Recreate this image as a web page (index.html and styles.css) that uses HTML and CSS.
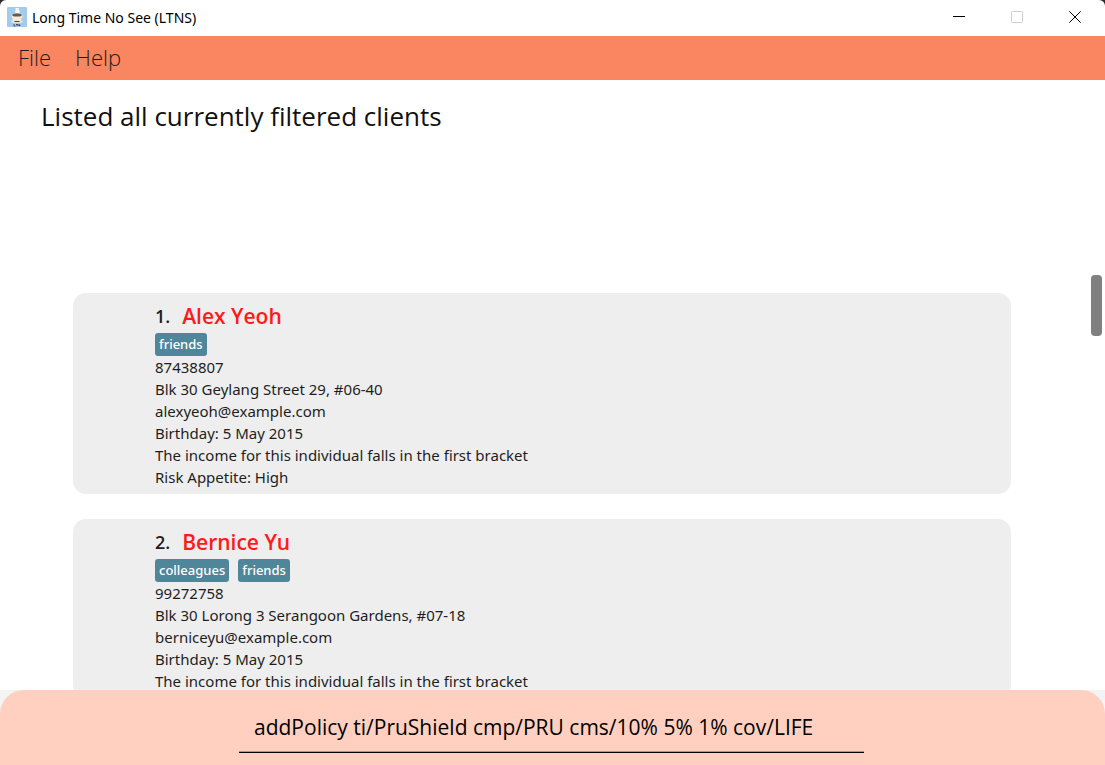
FILE: index.html
```html
<!DOCTYPE html>
<html lang="en">
<head>
<meta charset="utf-8">
<title>Long Time No See (LTNS)</title>
<link rel="stylesheet" href="styles.css">
</head>
<body>
<div class="window">
  <header class="titlebar">
    <svg class="app-icon" viewBox="0 0 20 20" aria-hidden="true">
      <rect width="20" height="20" rx="1" fill="#a3cbee"/>
      <path d="M8.500 6C7.500 4 9 3 8.500 1h3.500c-1 2 1.500 2 .5 5z" fill="#f4f8fb"/>
      <ellipse cx="10" cy="14.500" rx="6" ry="1.800" fill="#e9e3d8"/>
      <path d="M4.500 7.500h11c0 4.500-2 7-5.500 7s-5.500-2.500-5.500-7z" fill="#f3ead9"/>
      <path d="M15 8.500c2.500-.5 2 3-1 3" fill="none" stroke="#d8cdb8"/>
      <ellipse cx="10" cy="8" rx="4.800" ry="1.600" fill="#6b5847"/>
      <path d="M7.500 14.500h5" stroke="#4c443b"/>
      <path d="M7 17v2h1.500M9 17.500h2M10 17.500V19M11.800 19v-1.500l1 1.500v-1.500" fill="none" stroke="#26384c" stroke-width=".8"/>
    </svg>
    <h1 class="window-title">Long Time No See (LTNS)</h1>
    <div class="window-controls">
      <button class="window-button" type="button" aria-label="Minimize"><svg viewBox="0 0 12 12"><path d="M0 5.500h12"/></svg></button>
      <button class="window-button" type="button" aria-label="Maximize" disabled><svg viewBox="0 0 12 12"><rect x=".5" y=".5" width="11" height="11" rx="1"/></svg></button>
      <button class="window-button" type="button" aria-label="Close"><svg viewBox="0 0 12 12"><path d="M.3.3l11.400 11.400M11.700.3L.3 11.700"/></svg></button>
    </div>
  </header>
  <nav class="menubar">
    <button class="menu" type="button">File</button>
    <button class="menu" type="button">Help</button>
  </nav>
  <main class="content">
    <p class="result" role="status">Listed all currently filtered clients</p>
    <div class="list-area">
      <ol class="clients">
        <li class="card">
          <h2 class="card-head"><span class="index">1.</span><span class="name">Alex Yeoh</span></h2>
          <div class="tags"><span class="tag">friends</span></div>
          <p>87438807</p>
          <p>Blk 30 Geylang Street 29, #06-40</p>
          <p>alexyeoh@example.com</p>
          <p>Birthday: 5 May 2015</p>
          <p>The income for this individual falls in the first bracket</p>
          <p>Risk Appetite: High</p>
        </li>
        <li class="card">
          <h2 class="card-head"><span class="index">2.</span><span class="name">Bernice Yu</span></h2>
          <div class="tags"><span class="tag">colleagues</span><span class="tag">friends</span></div>
          <p>99272758</p>
          <p>Blk 30 Lorong 3 Serangoon Gardens, #07-18</p>
          <p>berniceyu@example.com</p>
          <p>Birthday: 5 May 2015</p>
          <p>The income for this individual falls in the first bracket</p>
        </li>
      </ol>
      <div class="scrollbar"><div class="thumb"></div></div>
    </div>
  </main>
  <footer class="command-area">
    <form class="command-bar">
      <input class="command" type="text" aria-label="Command" value="addPolicy ti/PruShield cmp/PRU cms/10% 5% 1% cov/LIFE">
    </form>
  </footer>
</div>
</body>
</html>
```
FILE: styles.css
```css
* { box-sizing: border-box; }

body {
  margin: 0;
  background: #2b2b2b;
  color: #1e1e1e;
  font-family: "Noto Sans", "Open Sans", sans-serif;
}

h1, h2, p, ol { margin: 0; padding: 0; }
button { border: 0; background: none; font: inherit; color: inherit; }

.window {
  display: flex;
  flex-direction: column;
  height: 100vh;
  overflow: hidden;
  background: #fff;
  border-radius: 6px 6px 0 0;
}

.titlebar {
  display: flex;
  align-items: center;
  flex: none;
  height: 36px;
  padding: 0 1px 2px 7px;
  gap: 5px;
}
.app-icon { width: 20px; height: 20px; }
.window-title { flex: 1; font-size: 14px; font-weight: 400; color: #000; }
.window-controls { display: flex; height: 100%; }
.window-button {
  display: flex;
  align-items: center;
  justify-content: center;
  width: 58px;
  padding: 0;
}
.window-button svg { width: 12px; height: 12px; fill: none; stroke: #000; }
.window-button:disabled svg { stroke: #ccc; }

.menubar {
  display: flex;
  flex: none;
  height: 44px;
  padding-left: 6px;
  background: #f98561;
  font-family: "Open Sans", sans-serif;
}
.menu { padding: 0 12px 2px; font-size: 22px; font-weight: 300; }

.content {
  display: flex;
  flex-direction: column;
  flex: 1;
  min-height: 0;
}
.result {
  flex: none;
  height: 195px;
  padding: 18px 41px;
  font-family: "Open Sans", sans-serif;
  font-size: 26px;
  line-height: 36px;
  color: #111;
}

.list-area { display: flex; flex: 1; min-height: 0; }
.clients {
  display: flex;
  flex-direction: column;
  flex: 1;
  gap: 25px;
  padding: 18px 80px 0 73px;
  overflow: hidden;
  list-style: none;
}
.card {
  flex: none;
  padding: 7px 82px 6px;
  border-radius: 13px;
  background: #eee;
  font-size: 15px;
  line-height: 22px;
}
.card-head {
  display: flex;
  align-items: center;
  gap: 12px;
  font-family: "Open Sans", sans-serif;
  line-height: 33px;
  font-weight: 600;
}
.index { font-size: 18px; }
.name { font-size: 21px; color: #ff1a1a; }
.tags { display: flex; gap: 9px; }
.tag {
  padding: 0 4px;
  border-radius: 3px;
  background: #50869a;
  color: #fff;
  font-size: 13px;
  line-height: 23px;
  font-weight: 500;
}

.scrollbar { flex: none; width: 14px; }
.thumb { width: 11px; height: 61px; border-radius: 4px; background: #808080; }

.command-area { flex: none; background: #f4f4f4; }
.command-bar {
  display: flex;
  justify-content: center;
  height: 75px;
  padding: 12px 2px 12px 0;
  border-radius: 24px 24px 0 0;
  background: #ffd0c0;
}
.command {
  width: 625px;
  max-width: 90%;
  padding: 0 15px;
  border: 0;
  border-bottom: 1px solid #000;
  box-shadow: inset 0 -1px #b39287;
  outline: 0;
  background: none;
  color: #000;
  font-family: "Open Sans", sans-serif;
  font-size: 21px;
}
```
